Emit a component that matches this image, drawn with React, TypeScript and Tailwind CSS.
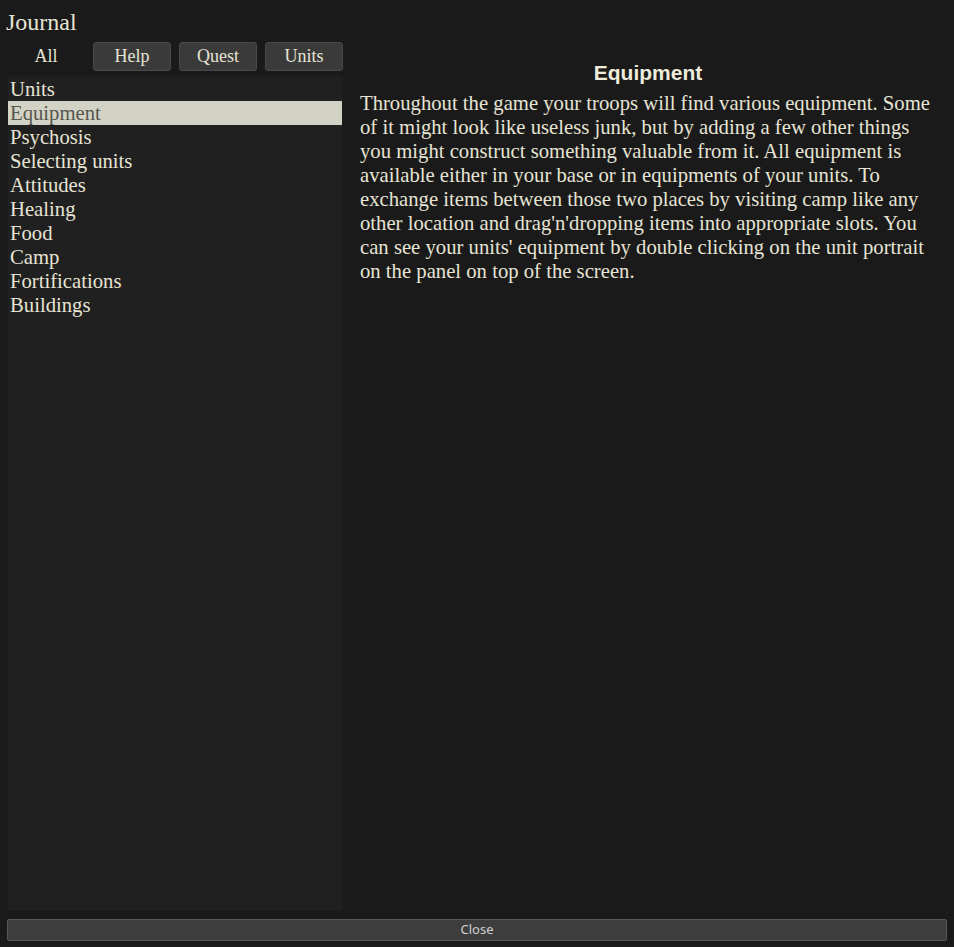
import React from "react";

const serif = { fontFamily: '"Liberation Serif", "Times New Roman", serif' };

const items = [
  "Units",
  "Equipment",
  "Psychosis",
  "Selecting units",
  "Attitudes",
  "Healing",
  "Food",
  "Camp",
  "Fortifications",
  "Buildings",
];

export default function App() {
  return (
    <div className="w-full h-[947px] bg-[#1a1a1a] flex flex-col text-[#e6e4d4] overflow-hidden" style={serif}>
      <div className="pt-[8px] px-[6px] h-[36px] text-[24px] leading-[28px]">Journal</div>
      <div className="flex-1 min-h-0 flex flex-row px-[7px] pt-[6px] gap-[8px]">
        <div className="w-[336px] flex flex-col">
          <div className="grid grid-cols-4 gap-[8px] h-[27px]">
            <div className="flex items-center justify-center text-[18px]">All</div>
            <button className="flex items-center justify-center text-[18px] bg-[#3a3a3a] border border-[#4a4a4a] rounded-[3px] text-[#e6e4d4]" style={serif}>Help</button>
            <button className="flex items-center justify-center text-[18px] bg-[#3a3a3a] border border-[#4a4a4a] rounded-[3px] text-[#e6e4d4]" style={serif}>Quest</button>
            <button className="flex items-center justify-center text-[18px] bg-[#3a3a3a] border border-[#4a4a4a] rounded-[3px] text-[#e6e4d4]" style={serif}>Units</button>
          </div>
          <div className="mt-[7px] flex-1 bg-[#202020] border border-[#1d1d1d]">
            {items.map((it) => (
              <div
                key={it}
                className={
                  "h-[24px] leading-[24px] text-[20.7px] pl-[2px] " +
                  (it === "Equipment" ? "bg-[#d3d3c5] text-[#56564f]" : "")
                }
              >
                {it}
              </div>
            ))}
          </div>
        </div>
        <div className="flex-1 pl-[9px] pr-[11px] pt-[19px]">
          <div
            className="text-center font-bold text-[21px] leading-[24px] text-[#eeecdc]"
            style={{ fontFamily: '"Liberation Sans", Arial, sans-serif' }}
          >
            Equipment
          </div>
          <p className="mt-[6px] text-[20.7px] leading-[24px]">
            Throughout the game your troops will find various equipment. Some of it might look like useless junk, but by adding a few other things you might construct something valuable from it. All equipment is available either in your base or in equipments of your units. To exchange items between those two places by visiting camp like any other location and drag'n'dropping items into appropriate slots. You can see your units' equipment by double clicking on the unit portrait on the panel on top of the screen.
          </p>
        </div>
      </div>
      <div className="px-[7px] pt-[8px] pb-[6px]">
        <button
          className="w-full h-[22px] bg-[#3d3d3d] border border-[#585858] rounded-[2px] text-[13px] text-[#d0d0d0] flex items-center justify-center"
          style={{ fontFamily: '"Noto Sans", "DejaVu Sans", sans-serif' }}
        >
          Close
        </button>
      </div>
    </div>
  );
}
